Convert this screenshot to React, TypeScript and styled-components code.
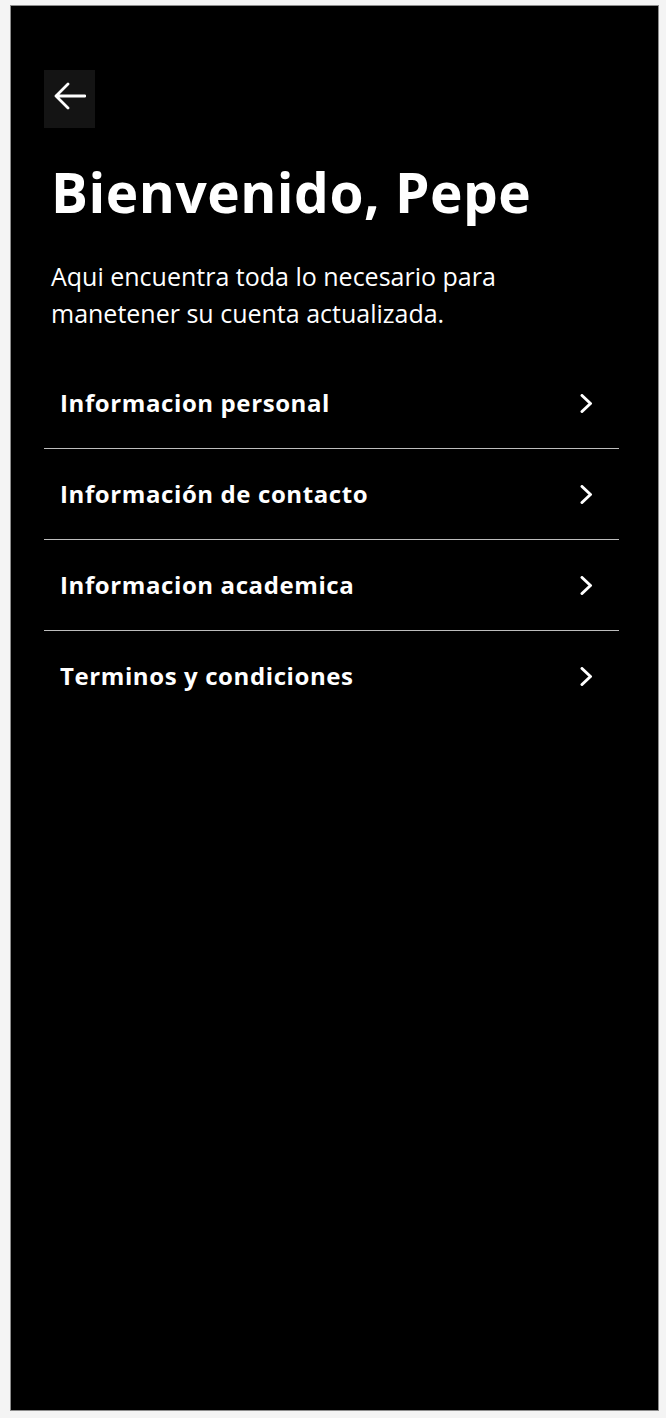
import React from "react";
import styled, { createGlobalStyle } from "styled-components";

const GlobalStyle = createGlobalStyle`
  html, body {
    margin: 0;
    padding: 0;
    background: #f4f4f4;
  }
  body {
    font-family: "Open Sans", "Noto Sans", sans-serif;
    -webkit-font-smoothing: antialiased;
  }
  * { box-sizing: border-box; }
`;

const Screen = styled.main`
  width: 649px;
  height: 1406px;
  margin: 5px 7px 7px 10px;
  background: #000;
  border: 1px solid #8c8c8c;
  padding: 64px 39px 0 33px;
  display: flex;
  flex-direction: column;
  color: #fff;
`;

const BackButton = styled.button`
  width: 51px;
  height: 58px;
  background: #141414;
  border: none;
  padding: 0 0 6px 0;
  display: flex;
  align-items: center;
  justify-content: center;
  cursor: pointer;
  color: #fff;
`;

const Intro = styled.section`
  padding-left: 7px;
  display: flex;
  flex-direction: column;
`;

const Title = styled.h1`
  margin: 32px 0 0 0;
  font-size: 55px;
  line-height: 64px;
  font-weight: 700;
  letter-spacing: 0.5px;
`;

const Lead = styled.p`
  margin: 34px 0 0 0;
  font-size: 25px;
  line-height: 37px;
  font-weight: 400;
  max-width: 500px;
`;

const Menu = styled.ul`
  list-style: none;
  margin: 26px 0 0 0;
  padding: 0;
  display: flex;
  flex-direction: column;
`;

const MenuItem = styled.li<{ $last?: boolean }>`
  height: ${(p) => (p.$last ? "90px" : "91px")};
  border-bottom: ${(p) => (p.$last ? "none" : "1px solid #bdbdbd")};
  display: flex;
  align-items: center;
  justify-content: space-between;
  padding: 0 26px 0 16px;
`;

const ItemLabel = styled.span`
  font-size: 24px;
  font-weight: 700;
  line-height: 1;
  letter-spacing: 0.6px;
`;

const ArrowLeft = () => (
  <svg width="32" height="28" viewBox="0 0 32 28" fill="none" aria-hidden="true">
    <path
      d="M14 2 L2 14 L14 26 M2 14 H31"
      stroke="currentColor"
      strokeWidth="2.8"
      strokeLinecap="round"
      strokeLinejoin="round"
    />
  </svg>
);

const Chevron = () => (
  <svg width="13" height="19" viewBox="0 0 13 19" fill="none" aria-hidden="true">
    <path
      d="M2 1.5 L10.5 9.5 L2 17.5"
      stroke="#fff"
      strokeWidth="3"
      strokeLinecap="round"
      strokeLinejoin="round"
    />
  </svg>
);

const items = [
  "Informacion personal",
  "Información de contacto",
  "Informacion academica",
  "Terminos y condiciones",
];

export default function App() {
  return (
    <>
      <GlobalStyle />
      <Screen>
        <div>
          <BackButton aria-label="Volver">
            <ArrowLeft />
          </BackButton>
        </div>
        <Intro>
          <Title>Bienvenido, Pepe</Title>
          <Lead>Aqui encuentra toda lo necesario para manetener su cuenta actualizada.</Lead>
        </Intro>
        <Menu>
          {items.map((label, i) => (
            <MenuItem key={label} $last={i === items.length - 1}>
              <ItemLabel>{label}</ItemLabel>
              <Chevron />
            </MenuItem>
          ))}
        </Menu>
      </Screen>
    </>
  );
}
